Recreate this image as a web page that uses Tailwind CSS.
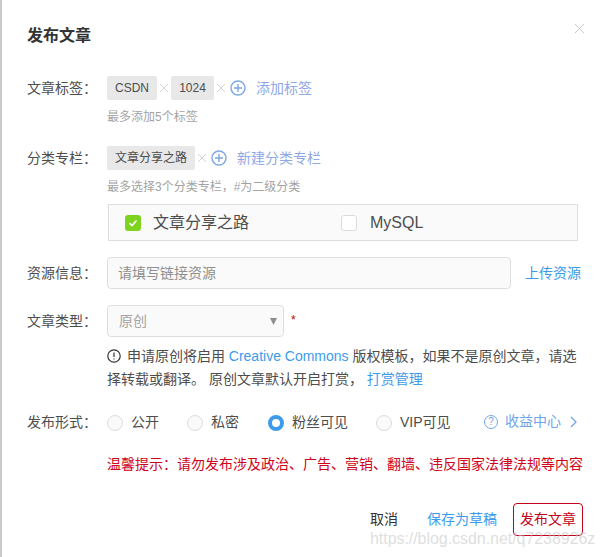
<!DOCTYPE html>
<html><head><meta charset="utf-8"><script src="https://cdn.jsdelivr.net/npm/@tailwindcss/browser@4"></script></head>
<body class="bg-white">
<div class="relative w-[604px] h-[557px] overflow-hidden bg-white border-l-[2px] border-[#c9c9c9] pl-[25px] text-[14px] text-[#4d4d4d] font-['Liberation_Sans','Noto_Sans_CJK_SC',sans-serif]">
  <button class="absolute left-[569px] top-[20px] w-[16px] h-[16px] flex items-center justify-center">
    <svg width="11" height="11" viewBox="0 0 11 11" fill="none" stroke="#c8c8c8" stroke-width="1"><path d="M1 1L10 10M10 1L1 10"/></svg>
  </button>
  <h1 class="pt-[25px] h-[76px] text-[16px] leading-[22px] font-bold text-[#333]">发布文章</h1>

  <div class="flex items-center h-[24px]">
    <span class="w-[80px] text-[#4d4d4d]">文章标签：</span>
    <span class="h-[24px] w-[50px] rounded-[2px] bg-[#e8e8e8] text-[12px] flex items-center justify-center">CSDN</span>
    <svg class="mx-[3px]" width="8" height="8" viewBox="0 0 8 8" fill="none" stroke="#d4d4d4"><path d="M0 0L8 8M8 0L0 8"/></svg>
    <span class="h-[24px] w-[43px] rounded-[2px] bg-[#e8e8e8] text-[12px] flex items-center justify-center">1024</span>
    <svg class="mx-[3px]" width="8" height="8" viewBox="0 0 8 8" fill="none" stroke="#d4d4d4"><path d="M0 0L8 8M8 0L0 8"/></svg>
    <svg class="ml-[2px]" width="16" height="16" viewBox="0 0 16 16" fill="none" stroke="#7ba7e3" stroke-width="1.4"><circle cx="8" cy="8" r="7"/><path d="M8 4V12M4 8H12"/></svg>
    <span class="ml-[10px] text-[#8fa8e6]">添加标签</span>
  </div>
  <p class="pl-[80px] mt-[9px] text-[12px] leading-[17px] text-[#a3a3a3]">最多添加5个标签</p>

  <div class="flex items-center h-[24px] mt-[20px]">
    <span class="w-[80px]">分类专栏：</span>
    <span class="h-[24px] w-[88px] rounded-[2px] bg-[#e8e8e8] text-[12px] flex items-center justify-center">文章分享之路</span>
    <svg class="mx-[3px]" width="8" height="8" viewBox="0 0 8 8" fill="none" stroke="#d4d4d4"><path d="M0 0L8 8M8 0L0 8"/></svg>
    <svg class="ml-[2px]" width="16" height="16" viewBox="0 0 16 16" fill="none" stroke="#7ba7e3" stroke-width="1.4"><circle cx="8" cy="8" r="7"/><path d="M8 4V12M4 8H12"/></svg>
    <span class="ml-[10px] text-[#8fa8e6]">新建分类专栏</span>
  </div>
  <p class="pl-[80px] mt-[9px] text-[12px] leading-[17px] text-[#a3a3a3]">最多选择3个分类专栏，#为二级分类</p>

  <div class="ml-[81px] mt-[8px] w-[470px] h-[37px] border border-[#dedede] bg-[#fafafa] flex items-center pl-[16px] text-[16px] leading-[24px] text-[#4d4d4d]">
    <span class="w-[16px] h-[16px] rounded-[3px] bg-[#7ed321] flex items-center justify-center">
      <svg width="10" height="10" viewBox="0 0 10 10" fill="none" stroke="#fff" stroke-width="1.6"><path d="M1.5 5.2L4 7.5L8.5 2.5"/></svg>
    </span>
    <span class="ml-[12px] w-[188px] pt-[1px]">文章分享之路</span>
    <span class="w-[16px] h-[16px] rounded-[3px] bg-white border border-[#dcdcdc]"></span>
    <span class="ml-[13px] pt-[1px]">MySQL</span>
  </div>

  <div class="flex items-center h-[32px] mt-[16px]">
    <span class="w-[80px]">资源信息：</span>
    <span class="w-[404px] h-[32px] border border-[#dedede] rounded-[4px] bg-[#fafafa] pl-[10px] flex items-center text-[#8f8f8f]">请填写链接资源</span>
    <span class="ml-[14px] text-[#3d9bea]">上传资源</span>
  </div>

  <div class="flex items-center h-[32px] mt-[16px]">
    <span class="w-[80px]">文章类型：</span>
    <span class="relative w-[177px] h-[32px] border border-[#dedede] rounded-[4px] bg-[#fafafa] pl-[11px] flex items-center text-[#a3a3a3]">原创
      <svg class="absolute right-[6px] top-[12px]" width="7" height="7" viewBox="0 0 7 7" fill="#8c8c8c"><path d="M0 0H7L3.5 7Z"/></svg>
    </span>
    <span class="ml-[7px] -mt-[2px] text-[12px] text-[#c00]">*</span>
  </div>

  <div class="ml-[80px] mt-[8px] w-[478px] leading-[23px] text-[#4d4d4d]">
    <svg class="inline-block align-[-2px] mr-[2px]" width="14" height="14" viewBox="0 0 14 14" fill="none" stroke="#333" stroke-width="1.2"><circle cx="7" cy="7" r="6.2"/><path d="M7 3.4V8M7 9.4V10.6"/></svg>
    申请原创将启用 <span class="text-[#3d9bea]">Creative Commons</span> 版权模板，如果不是原创文章，请选择转载或翻译。 原创文章默认开启打赏， <span class="text-[#3d9bea]">打赏管理</span>
  </div>

  <div class="flex items-center h-[20px] mt-[22px]">
    <span class="w-[80px] -mt-[2px]">发布形式：</span>
    <span class="w-[16px] h-[16px] rounded-full border border-[#dcdcdc] bg-[#fafafa]"></span>
    <span class="ml-[8px] w-[56px] -mt-[1px]">公开</span>
    <span class="w-[16px] h-[16px] rounded-full border border-[#dcdcdc] bg-[#fafafa]"></span>
    <span class="ml-[8px] w-[57px] -mt-[1px]">私密</span>
    <span class="w-[16px] h-[16px] rounded-full border-[4px] border-[#3d9bea] bg-white"></span>
    <span class="ml-[8px] w-[84px] -mt-[1px]">粉丝可见</span>
    <span class="w-[16px] h-[16px] rounded-full border border-[#dcdcdc] bg-[#fafafa]"></span>
    <span class="ml-[8px] w-[84px] -mt-[1px]">VIP可见</span>
    <span class="w-[14px] h-[14px] -mt-[3px] rounded-full border border-[#6fa5e8] text-[#6fa5e8] text-[10px] leading-[12px] text-center">?</span>
    <span class="ml-[7px] -mt-[3px] w-[65px] text-[#6fa5e8]">收益中心</span>
    <svg class="-mt-[3px]" width="7" height="12" viewBox="0 0 7 12" fill="none" stroke="#6fa5e8" stroke-width="1.3"><path d="M1 1L6 6L1 11"/></svg>
  </div>

  <p class="ml-[80px] mt-[21px] leading-[20px] text-[#d0021b] whitespace-nowrap">温馨提示：请勿发布涉及政治、广告、营销、翻墙、违反国家法律法规等内容</p>

  <div class="flex items-center h-[33px] mt-[29px] pl-[343px]">
    <span class="w-[57px] text-[#333] -mt-[1px]">取消</span>
    <span class="w-[86px] text-[#3d9bea] -mt-[1px]">保存为草稿</span>
    <span class="w-[70px] h-[33px] pb-[1px] border border-[#c4001a] rounded-[4px] text-[#c4001a] flex items-center justify-center">发布文章</span>
  </div>

  <span class="absolute left-[368px] top-[528px] text-[16px] leading-[22px] text-[#c8c8c8]/60 tracking-[-0.05px] whitespace-nowrap">https://blog.csdn.net/q7238926z</span>
</div>
</body></html>
